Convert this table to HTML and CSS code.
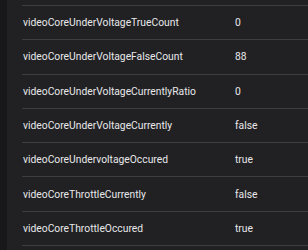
FILE: index.html
```html
<!DOCTYPE html>
<html>
<head>
<meta charset="utf-8">
<link rel="stylesheet" href="styles.css">
</head>
<body>
<div class="layout">
  <aside class="side"></aside>
  <main class="main">
    <div class="table">
      <div class="row"><span class="key">videoCoreUnderVoltageTrueCount</span><span class="val">0</span></div>
      <div class="row"><span class="key">videoCoreUnderVoltageFalseCount</span><span class="val">88</span></div>
      <div class="row"><span class="key">videoCoreUnderVoltageCurrentlyRatio</span><span class="val">0</span></div>
      <div class="row"><span class="key">videoCoreUnderVoltageCurrently</span><span class="val">false</span></div>
      <div class="row"><span class="key">videoCoreUndervoltageOccured</span><span class="val">true</span></div>
      <div class="row"><span class="key">videoCoreThrottleCurrently</span><span class="val">false</span></div>
      <div class="row"><span class="key">videoCoreThrottleOccured</span><span class="val">true</span></div>
    </div>
  </main>
</div>
</body>
</html>
```
FILE: styles.css
```css
html, body {
  margin: 0;
  padding: 0;
  height: 100%;
  background: #212124;
}
body {
  font-family: Roboto, "Liberation Sans", sans-serif;
  font-size: 10.3px;
  color: #e8e8ea;
  overflow: hidden;
}
.layout {
  display: flex;
  height: 250px;
}
.side {
  width: 7px;
  flex: none;
  background: #18181b;
}
.main {
  flex: 1;
  padding: 5px 0 0 15px;
}
.table {
  border-top: 1px solid #3e3e42;
}
.row {
  display: grid;
  grid-template-columns: 213px 1fr;
  align-items: center;
  height: 34.3px;
  box-sizing: border-box;
  border-bottom: 1px solid #3e3e42;
}
.key {
  padding-left: 1px;
}
```
